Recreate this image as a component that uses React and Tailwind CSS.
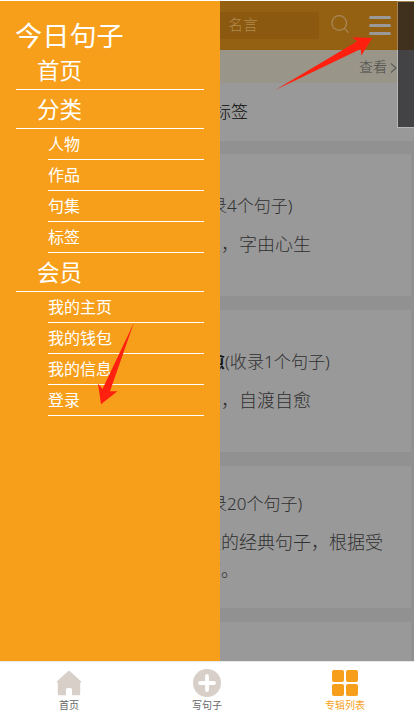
const categories = ["人物", "作品", "句集", "标签"];
const memberLinks = ["我的主页", "我的钱包", "我的信息", "登录"];

function MenuHeading({ children }) {
  return (
    <div className="flex h-[39px] items-center border-b border-white pl-[21px] pt-[2px] text-[22.500px] leading-none">
      <span>{children}</span>
    </div>
  );
}

function MenuItem({ children }) {
  return (
    <div className="ml-8 flex h-[31px] items-center border-b border-white text-[16px] leading-none">
      {children}
    </div>
  );
}

function Drawer() {
  return (
    <nav className="w-[220px] shrink-0 bg-[#f79f1b] pl-4 pr-4 text-white">
      <h1 className="-ml-px flex h-[50px] items-end pb-[2px] text-[27.200px] leading-[27px]">
        今日句子
      </h1>
      <MenuHeading>首页</MenuHeading>
      <MenuHeading>分类</MenuHeading>
      {categories.map((c) => (
        <MenuItem key={c}>{c}</MenuItem>
      ))}
      <MenuHeading>会员</MenuHeading>
      {memberLinks.map((m) => (
        <MenuItem key={m}>{m}</MenuItem>
      ))}
    </nav>
  );
}

function Card({ children, compact }) {
  return (
    <article
      className={`mb-[14px] mr-[3px] h-[142px] shrink-0 overflow-hidden whitespace-nowrap bg-[#999] font-light text-[#303030] ${
        compact ? "pt-[25px]" : "pt-[39px]"
      }`}
    >
      {children}
    </article>
  );
}

function Content() {
  return (
    <main className="flex min-w-0 flex-1 flex-col overflow-hidden bg-[#919191]">
      <header className="flex h-[49px] shrink-0 items-center bg-[#946011]">
        <div className="flex h-[27px] w-[99px] items-center bg-[#8b590f] pb-[3px] pl-2 text-[15px] font-light text-[#b08b50]">
          名言
        </div>
        <svg className="-mt-[3px] ml-3 h-[18px] w-[18px]" viewBox="0 0 18 18" fill="none" stroke="#a88a5c" strokeWidth="1.2">
          <circle cx="8.200" cy="8" r="7.300" />
          <path d="M13.200 13.200 17.700 17.700" />
        </svg>
        <div className="-mt-px ml-5 flex flex-col gap-[5px]">
          <span className="h-[3px] w-[22px] rounded-full bg-[#999]" />
          <span className="h-[3px] w-[22px] rounded-full bg-[#999]" />
          <span className="h-[3px] w-[22px] rounded-full bg-[#999]" />
        </div>
      </header>
      <div className="flex h-[33px] shrink-0 items-center bg-[#999689] pl-[139px] text-[14px] font-light text-[#484848]">
        <span>查看</span>
        <svg className="ml-[3px] mt-[2px] h-[10px] w-[7px]" viewBox="0 0 7 10" fill="none" stroke="#5c5c5c" strokeWidth="1.2">
          <path d="M1 .5 6 5 1 9.500" />
        </svg>
      </div>
      <div className="mb-[13px] flex h-[58px] shrink-0 items-center bg-[#999] text-[17px] font-light text-[#080808]">
        <span className="-ml-[6px]">标签</span>
      </div>
      <Card>
        <p className="-ml-[10px] text-[17px] leading-[26px]">录4个句子)</p>
        <p className="-ml-[17px] mt-[11px] text-[18px] leading-[28px]">处，字由心生</p>
      </Card>
      <Card>
        <p className="-ml-[12px] text-[17.100px] leading-[26px]">
          <b className="font-bold text-[#111]">愈</b>(收录1个句子)
        </p>
        <p className="-ml-[17px] mt-[11px] text-[18px] leading-[28px]">冬，自渡自愈</p>
      </Card>
      <Card compact>
        <p className="-ml-[10px] text-[17px] leading-[26px]">录20个句子)</p>
        <p className="-ml-[17px] mt-[11px] text-[18px] leading-[28px]">
          量的经典句子，根据受
          <br />
          序。
        </p>
      </Card>
      <Card />
    </main>
  );
}

function Tab({ label, active, children }) {
  return (
    <div className={`flex flex-1 flex-col items-center ${active ? "text-[#f79f1b]" : "text-[#666]"}`}>
      <svg className="mt-[7px] h-[28px] w-[28px]" viewBox="0 0 28 28" fill="currentColor">
        {children}
      </svg>
      <span className="mt-px text-[10px] leading-[14px]">{label}</span>
    </div>
  );
}

function TabBar() {
  return (
    <footer className="flex h-[56px] shrink-0 border-t border-[#e8e8e8] bg-white">
      <Tab label="首页">
        <path
          fill="#d7cfc8"
          d="M13 2.300Q14 1.500 15 2.300L26 12.300Q26.700 13.500 25.500 13.500H25.200V25Q25.200 26.200 24 26.200H17V20.500Q17 19 15.500 19H12.500Q11 19 11 20.500V26.200H4Q2.800 26.200 2.800 25V13.500H2.500Q1.300 13.500 2 12.300Z"
        />
      </Tab>
      <Tab label="写句子">
        <circle cx="14" cy="14" r="14" fill="#d7cfc8" />
        <path d="M14 7V21M7 14H21" stroke="#fff" strokeWidth="3.800" strokeLinecap="round" />
      </Tab>
      <Tab label="专辑列表" active>
        <rect x="1" y="1" width="12" height="12" rx="2" />
        <rect x="15" y="1" width="12" height="12" rx="2" />
        <rect x="1" y="15" width="12" height="12" rx="2" />
        <rect x="15" y="15" width="12" height="12" rx="2" />
      </Tab>
    </footer>
  );
}

export default function App() {
  return (
    <div className="relative flex h-[717px] w-[414px] flex-col overflow-hidden bg-white pt-px font-['Noto_Sans','Noto_Sans_CJK_SC',sans-serif]">
      <div className="flex h-[660px] shrink-0">
        <Drawer />
        <Content />
      </div>
      <TabBar />
      {/* Floating panel at the right edge */}
      <div className="absolute right-0 top-px flex h-[127px] w-[17px] flex-col border-b border-l border-t border-[#b5b5b5] bg-[#434345]">
        <div className="-ml-px -mt-px h-[49px] border-l border-t border-[#a88550] bg-[#40311f]" />
      </div>
      {/* Red pointer arrows */}
      <svg className="pointer-events-none absolute left-0 top-0 h-[717px] w-[414px]" viewBox="0 0 414 717" fill="#ff2010">
        <path d="M275.300 90 357.300 41.300 352 37.300 372.300 38 361.300 55.500 360.700 49Z" />
        <path d="M134 322.500 110 391.300 117.500 391.300 101 404.300 98 383.500 102.500 389Z" />
      </svg>
    </div>
  );
}
